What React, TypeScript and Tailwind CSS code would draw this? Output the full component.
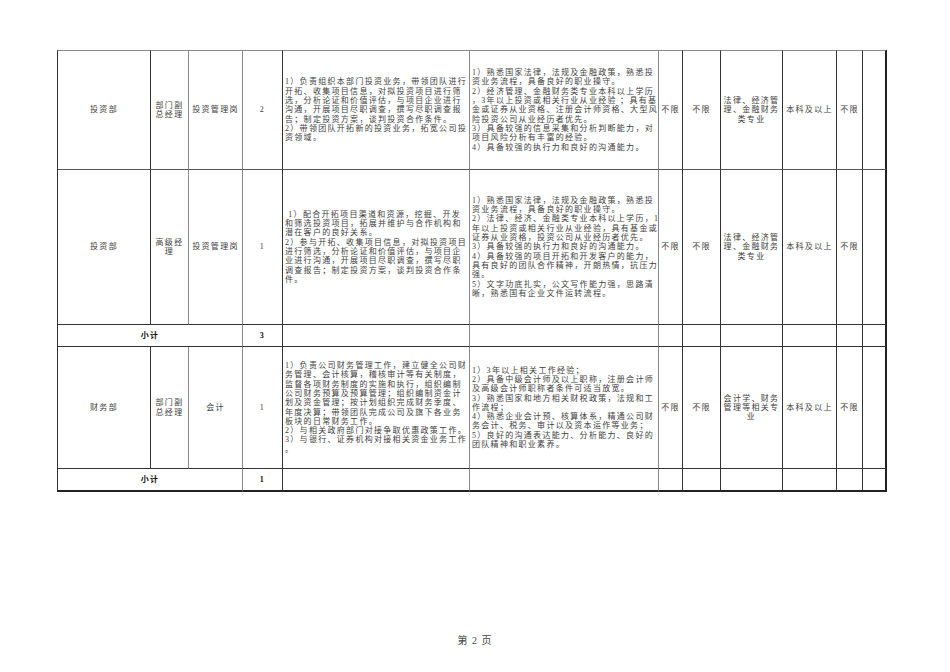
import React from "react";

type Cell = {
  lines: string[];
  align?: "left" | "center";
  bold?: boolean;
  span?: number;
};

const font = { fontFamily: '"Liberation Serif", "Noto Sans CJK SC", serif' };

// right-border colour per column, roughly as in the scan
const colBorder = [
  "border-r-[#333]",
  "border-r-[#888]",
  "border-r-[#888]",
  "border-r-[#333]",
  "border-r-[#888]",
  "border-r-[#888]",
  "border-r-[#333]",
  "border-r-[#333]",
  "border-r-[#333]",
  "border-r-[#333]",
  "border-r-[#333]",
  "border-r-[2px] border-r-[#222]",
];
const colWidths = [94, 38, 54, 40, 187, 189, 24, 38, 62, 54, 26, 24];

const rows: { h: string; bottom: string; cells: Cell[] }[] = [
  {
    h: "h-[120px]",
    bottom: "border-b-[#555]",
    cells: [
      { lines: ["投资部"] },
      { lines: ["部门副", "总经理"] },
      { lines: ["投资管理岗"] },
      { lines: ["2"] },
      {
        align: "left",
        lines: [
          "1）负责组织本部门投资业务，带领团队进行",
          "开拓、收集项目信息，对拟投资项目进行筛",
          "选，分析论证和价值评估，与项目企业进行",
          "沟通，开展项目尽职调查，撰写尽职调查报",
          "告；制定投资方案，谈判投资合作条件。",
          "2）带领团队开拓新的投资业务，拓宽公司投",
          "资领域。",
        ],
      },
      {
        align: "left",
        lines: [
          "1）熟悉国家法律，法规及金融政策，熟悉投",
          "资业务流程，具备良好的职业操守。",
          "2）经济管理、金融财务类专业本科以上学历",
          "，3年以上投资或相关行业从业经验 ；具有基",
          "金或证券从业资格、注册会计师资格、大型风",
          "险投资公司从业经历者优先。",
          "3）具备较强的信息采集和分析判断能力，对",
          "项目风险分析有丰富的经验。",
          "4）具备较强的执行力和良好的沟通能力。",
        ],
      },
      { lines: ["不限"] },
      { lines: ["不限"] },
      { lines: ["法律、经济管", "理、金融财务", "类专业"] },
      { lines: ["本科及以上"] },
      { lines: ["不限"] },
      { lines: [] },
    ],
  },
  {
    h: "h-[155px]",
    bottom: "border-b-[#333]",
    cells: [
      { lines: ["投资部"] },
      { lines: ["高级经", "理"] },
      { lines: ["投资管理岗"] },
      { lines: ["1"] },
      {
        align: "left",
        lines: [
          "\u00a01）配合开拓项目渠道和资源，挖掘、开发",
          "和筛选投资项目，拓展并维护与合作机构和",
          "潜在客户的良好关系。",
          "2）参与开拓、收集项目信息，对拟投资项目",
          "进行筛选，分析论证和价值评估，与项目企",
          "业进行沟通，开展项目尽职调查，撰写尽职",
          "调查报告；制定投资方案，谈判投资合作条",
          "件。",
        ],
      },
      {
        align: "left",
        lines: [
          "1）熟悉国家法律，法规及金融政策，熟悉投",
          "资业务流程，具备良好的职业操守。",
          "2）法律、经济、金融类专业本科以上学历，1",
          "年以上投资或相关行业从业经验，具有基金或",
          "证券从业资格，投资公司从业经历者优先。",
          "3）具备较强的执行力和良好的沟通能力。",
          "4）具备较强的项目开拓和开发客户的能力，",
          "具有良好的团队合作精神，开朗热情，抗压力",
          "强。",
          "5）文字功底扎实，公文写作能力强，思路清",
          "晰，熟悉国有企业文件运转流程。",
        ],
      },
      { lines: ["不限"] },
      { lines: ["不限"] },
      { lines: ["法律、经济管", "理、金融财务", "类专业"] },
      { lines: ["本科及以上"] },
      { lines: ["不限"] },
      { lines: [] },
    ],
  },
  {
    h: "h-[22px]",
    bottom: "border-b-[#333]",
    cells: [
      { lines: ["小计"], bold: true, span: 3 },
      { lines: ["3"], bold: true },
      { lines: [] },
      { lines: [] },
      { lines: [] },
      { lines: [] },
      { lines: [] },
      { lines: [] },
      { lines: [] },
      { lines: [] },
    ],
  },
  {
    h: "h-[122px]",
    bottom: "border-b-[#333]",
    cells: [
      { lines: ["财务部"] },
      { lines: ["部门副", "总经理"] },
      { lines: ["会计"] },
      { lines: ["1"] },
      {
        align: "left",
        lines: [
          "1）负责公司财务管理工作，建立健全公司财",
          "务管理、会计核算，稽核审计等有关制度，",
          "监督各项财务制度的实施和执行，组织编制",
          "公司财务预算及预算管理；组织编制资金计",
          "划及资金管理；按计划组织完成财务季度、",
          "年度决算；带领团队完成公司及旗下各业务",
          "板块的日常财务工作。",
          "2）与相关政府部门对接争取优惠政策工作。",
          "3）与银行、证券机构对接相关资金业务工作",
          "。",
        ],
      },
      {
        align: "left",
        lines: [
          "1）3年以上相关工作经验；",
          "2）具备中级会计师及以上职称，注册会计师",
          "及高级会计师职称者条件可适当放宽。",
          "3）熟悉国家和地方相关财税政策，法规和工",
          "作流程；",
          "4）熟悉企业会计预、核算体系，精通公司财",
          "务会计、税务、审计以及资本运作等业务；",
          "5）良好的沟通表达能力、分析能力、良好的",
          "团队精神和职业素养。",
        ],
      },
      { lines: ["不限"] },
      { lines: ["不限"] },
      { lines: ["会计学、财务", "管理等相关专", "业"] },
      { lines: ["本科及以上"] },
      { lines: ["不限"] },
      { lines: [] },
    ],
  },
  {
    h: "h-[23px]",
    bottom: "border-b-[2px] border-b-[#222]",
    cells: [
      { lines: ["小计"], bold: true, span: 3 },
      { lines: ["1"], bold: true },
      { lines: [] },
      { lines: [] },
      { lines: [] },
      { lines: [] },
      { lines: [] },
      { lines: [] },
      { lines: [] },
      { lines: [] },
    ],
  },
];

const Row = ({ row, first }: { row: (typeof rows)[number]; first: boolean }) => {
  let col = 0;
  return (
    <tr>
      {row.cells.map((c, i) => {
        const span = c.span ?? 1;
        col += span;
        const rb = colBorder[col - 1];
        return (
          <td
            key={i}
            colSpan={span}
            className={`${row.h} p-0 px-[2px] align-middle border-r border-b ${rb} ${row.bottom} ${
              first ? "border-t border-t-[#888]" : ""
            } ${i === 0 ? "border-l border-l-[#333]" : ""} ${
              c.align === "left" ? "text-left" : "text-center"
            } ${c.bold ? "font-bold text-[#111]" : ""}`}
          >
            {c.lines.map((l, j) => (
              <div key={j} className="whitespace-nowrap">
                {l}
              </div>
            ))}
          </td>
        );
      })}
    </tr>
  );
};

export default function App() {
  return (
    <div className="w-[950px] h-[672px] bg-white overflow-hidden" style={font}>
      <div className="pt-[50px] pl-[57px]">
        <table className="table-fixed border-separate border-spacing-0 w-[830px] text-[8px] leading-[9.3px] tracking-[1.3px] text-[#404040]">
          <colgroup>
            {colWidths.map((w, i) => (
              <col key={i} style={{ width: w }} />
            ))}
          </colgroup>
          <tbody>
            {rows.map((r, i) => (
              <Row key={i} row={r} first={i === 0} />
            ))}
          </tbody>
        </table>
      </div>
      <div className="mt-[143px] text-center text-[10px] leading-[12px] text-[#444] tracking-[1px]">
        第 2 页
      </div>
    </div>
  );
}
